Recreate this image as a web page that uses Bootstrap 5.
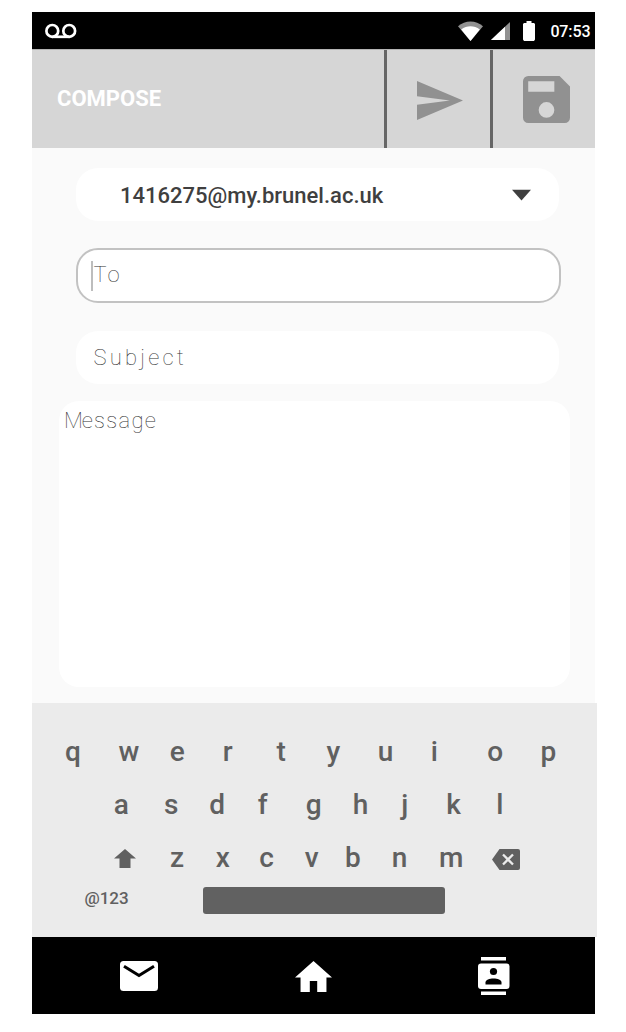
<!DOCTYPE html>
<html lang="en">
<head>
<meta charset="utf-8">
<meta name="viewport" content="width=device-width, initial-scale=1">
<title>Compose</title>
<link href="https://cdn.jsdelivr.net/npm/bootstrap@5.3.0/dist/css/bootstrap.min.css" rel="stylesheet">
<style>
body{background:#fff;font-family:Roboto,"Liberation Sans",sans-serif}
svg{display:block;flex:none}
.phone{width:562.6px;margin:12px 0 0 32.4px;background:#fafafa}
.statusbar{height:37px;background:#000;color:#fff;padding:0 4.5px 0 12.6px}
.clock{font-size:16px;font-weight:500;line-height:37px;margin-left:15.5px;padding-top:1px;letter-spacing:-.1px}
.appbar{height:99px;background:#d6d6d6;border-top:1px solid #b4b4b4;color:#919191}
.appbar h1{font-size:22px;font-weight:700;color:#fff;padding-left:24.6px;line-height:26px}
.tool{border:0;border-left:3px solid #666;background:none;color:inherit;padding:0}
.compose{height:555px;padding:20px 25px 0 26.6px}
.pill{width:483px;height:53px;border-radius:22px;background:#fff;margin-left:17px}
.pill.from{color:#3f3f3f;font-size:22px;font-weight:500;padding:0 28px 0 44px}
.pill.from span{padding-top:2px}
.pill.active{width:485px;height:55px;border:2px solid #c2c2c2;margin-top:27px;padding-left:13px}
.caret{width:2px;height:30px;background:#bdbdbd}
.thin{font-size:22px;font-weight:100;line-height:30px;color:#333}
.to{letter-spacing:1.8px;padding:0 0 2px .6px}
.subj{letter-spacing:3.2px}
.mess{letter-spacing:1.3px;padding-top:1px}
.mess::first-letter{letter-spacing:-1.2px}
.msg{width:511px;height:286px;border-radius:20px;background:#fff;margin-top:17px;padding:4px 5px}
.keyboard{width:564.6px;height:234px;background:#ebebeb;color:#606060;padding-top:22px}
.keys{display:grid;height:53px;font-size:28px;font-weight:500;line-height:53px}
.k1{grid-template-columns:53.4px 51.4px 52.9px 53.7px 50px 51.2px 53.2px 56.4px 53.4px auto;padding-left:32.7px}
.k2{grid-template-columns:50.2px 45.3px 48.6px 48.1px 47px 48.4px 45px 50px auto;padding-left:81.3px}
.k3{grid-template-columns:56.2px 45.7px 43.6px 45.5px 40.2px 46.7px 47.2px 52.6px auto;padding-left:81.5px}
.alt{font-size:17px;font-weight:500;line-height:22px;width:118.6px}
.space{width:242px;height:27px;border-radius:3px;background:#616161}
.dock{height:77px;background:#000;color:#fff;padding:0 85px 0 87.5px}
</style>
</head>
<body>
<main class="phone">
  <header>
    <div class="statusbar d-flex align-items-center">
      <svg width="32" height="16" viewBox="0 0 32 16" fill="none" stroke="#fff" stroke-width="2.7"><circle cx="7.3" cy="7.9" r="5.9"/><circle cx="24.2" cy="7.9" r="5.9"/><path d="M7.3 13.8h17"/></svg>
      <svg class="ms-auto" width="25" height="20" viewBox="0 0 25 20"><path d="M0 5.2C7-1.1 18-1.1 25 5.2L12.5 20z" fill="#919191"/><path d="M3.2 8.4c5.6-4.3 13-4.3 18.6 0L12.5 20z" fill="#fff"/></svg>
      <svg style="margin-left:8px" width="19" height="19" viewBox="0 0 19 19"><path d="M0 19 19 1v18z" fill="#919191"/><path d="M0 19 14 5.7V19z" fill="#fff"/></svg>
      <svg style="margin-left:13px" width="12" height="20" viewBox="0 0 12 20" fill="#fff"><path d="M3.5 0h5v2H11l1 1v15.5L11 20H1l-1-1.500V3l1-1h2.500z"/></svg>
      <span class="clock">07:53</span>
    </div>
    <div class="appbar d-flex">
      <h1 class="m-0 align-self-center flex-grow-1">COMPOSE</h1>
      <button class="tool" style="width:106px" aria-label="Send"><svg style="margin:2px 0 0 30px" width="46" height="39" viewBox="2 3 21 18" preserveAspectRatio="none" fill="currentColor"><path d="M2 21 23 12 2 3v7l15 2-15 2z"/></svg></button>
      <button class="tool" style="width:105px" aria-label="Save"><svg style="margin-left:30px" width="47" height="47" viewBox="3 3 18 18" fill="currentColor"><path d="M17 3H5a2 2 0 0 0-2 2v14a2 2 0 0 0 2 2h14a2 2 0 0 0 2-2V7zm-5 16a3 3 0 1 1 0-6 3 3 0 0 1 0 6zm3-10H5V5h10z"/></svg></button>
    </div>
  </header>
  <section class="compose">
    <div class="pill from d-flex align-items-center justify-content-between">
      <span>1416275@my.brunel.ac.uk</span>
      <svg width="19" height="12" viewBox="0 0 19 12" fill="#3f3f3f"><path d="M0 .7h19L9.500 11.500z"/></svg>
    </div>
    <div class="pill active d-flex align-items-center"><span class="caret"></span><span class="thin to">To</span></div>
    <div class="pill d-flex align-items-center" style="margin-top:28px;padding-left:17.500px"><span class="thin subj">Subject</span></div>
    <div class="msg"><div class="thin mess">Message</div></div>
  </section>
  <section class="keyboard">
    <div class="keys k1"><span>q</span><span>w</span><span>e</span><span>r</span><span>t</span><span>y</span><span>u</span><span>i</span><span>o</span><span>p</span></div>
    <div class="keys k2"><span>a</span><span>s</span><span>d</span><span>f</span><span>g</span><span>h</span><span>j</span><span>k</span><span>l</span></div>
    <div class="keys k3">
      <svg style="margin-top:18px" width="22" height="19" viewBox="0 0 22 19" fill="currentColor"><path d="M11 0 22 9.500h-5.500V19H5.500V9.500H0z"/></svg>
      <span>z</span><span>x</span><span>c</span><span>v</span><span>b</span><span>n</span><span>m</span>
      <svg style="margin-top:18px" width="28" height="21" viewBox="0 0 28 21"><path d="M7.500 0H26a2 2 0 0 1 2 2v17a2 2 0 0 1-2 2H7.500L0 10.500z" fill="#606060"/><path d="m11 5.500 10 10m0-10-10 10" stroke="#ebebeb" stroke-width="2.300"/></svg>
    </div>
    <div class="d-flex" style="padding:3px 0 0 52px"><span class="alt">@123</span><span class="space"></span></div>
  </section>
  <nav class="dock d-flex align-items-center justify-content-between">
    <svg width="38" height="30" viewBox="0 0 38 30"><rect width="38" height="30" rx="3.500" fill="#fff"/><path d="M4 5.200 19 14.500 34 5.200" fill="none" stroke="#000" stroke-width="3"/></svg>
    <svg style="margin:1px 8px 0 0" width="37" height="31" viewBox="2 3 20 17" preserveAspectRatio="none" fill="#fff"><path d="M10 20v-6h4v6h5v-8h3L12 3 2 12h3v8z"/></svg>
    <svg width="33" height="38" viewBox="0 0 33 38" fill="#fff"><path d="M4 0h25v3.500H4zM4 34.500h25V38H4z"/><rect x="1" y="6.500" width="31.500" height="25.500" rx="3"/><g fill="#000"><circle cx="16.500" cy="14.500" r="3.600"/><path d="M8.500 27.500v-2c0-5.400 16-5.400 16 0v2z"/></g></svg>
  </nav>
</main>
<script src="https://cdn.jsdelivr.net/npm/bootstrap@5.3.0/dist/js/bootstrap.bundle.min.js"></script>
</body>
</html>
